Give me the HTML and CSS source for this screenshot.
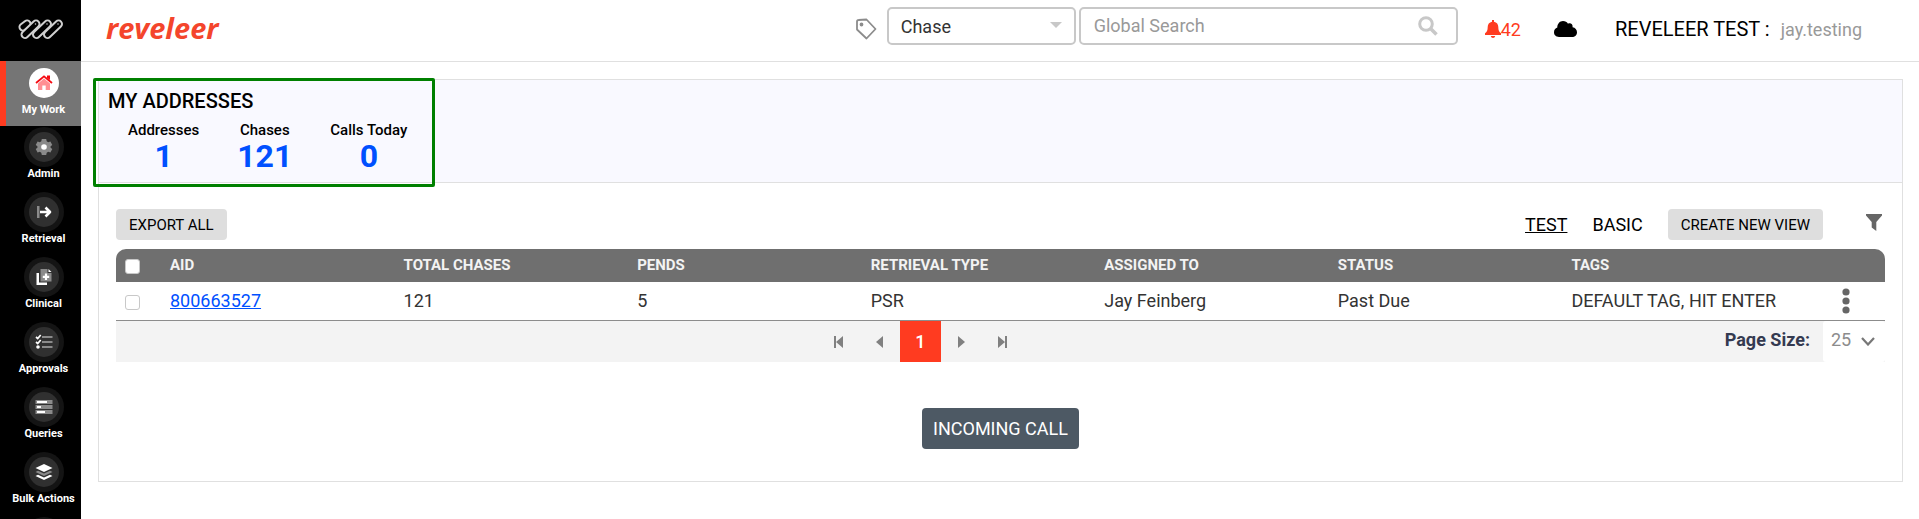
FILE: index.html
```html
<!DOCTYPE html>
<html lang="en">
<head>
    <meta charset="UTF-8">
    <meta name="viewport" content="width=device-width, initial-scale=1.0">
    <title>Reveleer - My Work</title>
    <link rel="stylesheet" href="styles.css">
</head>
<body>
    <!-- Left navigation -->
    <nav class="sidebar">
        <a class="sidebar-logo" href="#" aria-label="Home">
            <svg width="46" height="21" viewBox="0 0 46 21" fill="none" stroke-linecap="round">
                <path d="M9 5 L5 8" stroke="#d0d0d0" stroke-width="9"/>
                <path d="M9 5 L5 8" stroke="#000" stroke-width="5"/>
                <path d="M18 5 L7 15.500" stroke="#d0d0d0" stroke-width="9"/>
                <path d="M18 5 L7 15.500" stroke="#000" stroke-width="5"/>
                <path d="M29.500 5 L18.500 15.500" stroke="#d0d0d0" stroke-width="9"/>
                <path d="M29.500 5 L18.500 15.500" stroke="#000" stroke-width="5"/>
                <path d="M40.500 5 L29.500 15.500" stroke="#d0d0d0" stroke-width="9"/>
                <path d="M40.500 5 L29.500 15.500" stroke="#000" stroke-width="5"/>
                <path d="M17.500 5 V5.100 M29 5 V5.100 M40 5 V5.100" stroke="#d0d0d0" stroke-width="1.500"/>
            </svg>
        </a>
        <a class="nav-item active" href="#">
            <span class="nav-icon">
                <svg width="18" height="16" viewBox="0 0 18 16">
                    <path d="M3 8.500 L9 3.500 L15 8.500 V15 H10.700 V10.500 H7.300 V15 H3 Z" fill="#ff8f93"/>
                    <path d="M1 8 L9 1.300 L17 8" fill="none" stroke="#f50b12" stroke-width="1.800"/>
                    <path d="M12 0.500 H15 V5 L12 3 Z" fill="#f50b12"/>
                </svg>
            </span>
            My Work
        </a>
        <a class="nav-item" href="#">
            <span class="nav-icon">
                <svg width="18" height="18" viewBox="0 0 18 18">
                    <path d="M6.800 1 H11.200 L11.700 3.300 L13.200 4.200 L15.400 3.500 L17.300 7 L15.600 8.300 V9.700 L17.300 11 L15.400 14.500 L13.200 13.800 L11.700 14.700 L11.200 17 H6.800 L6.300 14.700 L4.800 13.800 L2.600 14.500 L0.700 11 L2.400 9.700 V8.300 L0.700 7 L2.600 3.500 L4.800 4.200 L6.300 3.300 Z" fill="#8a8a8a"/>
                    <circle cx="9" cy="9" r="2.800" fill="#fff"/>
                </svg>
            </span>
            Admin
        </a>
        <a class="nav-item" href="#">
            <span class="nav-icon">
                <svg width="16" height="14" viewBox="0 0 16 14">
                    <rect x="1" y="1" width="2.500" height="12" fill="#8a8a8a"/>
                    <path d="M4 7 H14 M9.500 2.500 L14 7 L9.500 11.500" fill="none" stroke="#fff" stroke-width="2.600" stroke-linejoin="round"/>
                </svg>
            </span>
            Retrieval
        </a>
        <a class="nav-item" href="#">
            <span class="nav-icon">
                <svg width="18" height="18" viewBox="0 0 18 18">
                    <path d="M1.500 5 H4 V14.500 H12 V17 H1.500 Z" fill="#fff"/>
                    <path d="M5.500 1 H12.500 V5 H16.500 V13.500 H5.500 Z" fill="#8a8a8a"/>
                    <path d="M13.500 1 L16.500 4 H13.500 Z" fill="#fff"/>
                    <path d="M11 5.500 V12 M7.800 8.800 H14.200" stroke="#fff" stroke-width="2.200"/>
                </svg>
            </span>
            Clinical
        </a>
        <a class="nav-item" href="#">
            <span class="nav-icon">
                <svg width="18" height="16" viewBox="0 0 18 16" fill="none">
                    <path d="M7 3 H17.500 M7 8 H17.500 M7 13 H17.500" stroke="#8a8a8a" stroke-width="2"/>
                    <path d="M1 3 L2.700 4.500 L5.700 1 M1 8 L2.700 9.500 L5.700 6" stroke="#fff" stroke-width="1.700"/>
                    <circle cx="3" cy="13" r="1.800" fill="#fff"/>
                </svg>
            </span>
            Approvals
        </a>
        <a class="nav-item" href="#">
            <span class="nav-icon">
                <svg width="18" height="16" viewBox="0 0 18 16">
                    <path d="M0.500 1 H17.500 V5 H0.500 Z M0.500 6 H17.500 V10 H0.500 Z M0.500 11 H17.500 V15 H0.500 Z" fill="#8a8a8a"/>
                    <path d="M2 2 H12 V4 H2 Z M2 7 H6 V9 H2 Z M2 12 H10 V14 H2 Z" fill="#fff"/>
                </svg>
            </span>
            Queries
        </a>
        <a class="nav-item" href="#">
            <span class="nav-icon">
                <svg width="18" height="18" viewBox="0 0 18 18">
                    <path d="M9 1 L17.500 5 L9 9 L0.500 5 Z" fill="#fff"/>
                    <path d="M0.500 9 L3 7.800 L9 10.500 L15 7.800 L17.500 9 L9 13 Z" fill="#8a8a8a"/>
                    <path d="M0.500 13 L3 11.800 L9 14.500 L15 11.800 L17.500 13 L9 17 Z" fill="#fff"/>
                </svg>
            </span>
            Bulk Actions
        </a>
        <a class="nav-item" href="#" aria-label="More">
            <span class="nav-icon"></span>
        </a>
    </nav>

    <div class="page">
        <header class="topbar">
            <a class="brand" href="#">reveleer</a>
            <div class="search">
                <svg class="tag-icon" width="22" height="22" viewBox="0 0 22 22" fill="none" stroke="#8c8c8c" stroke-width="1.800" stroke-linejoin="round">
                    <path d="M2 3.500 Q2 2 3.500 2 L11.500 1.500 L20.500 11 L11.500 20.500 L2 11.500 Z"/>
                    <circle cx="6.500" cy="6.500" r="1" fill="#8c8c8c"/>
                </svg>
                <div class="select-wrap">
                    <select class="search-type" aria-label="Search type">
                        <option>Chase</option>
                    </select>
                    <svg class="select-arrow" width="12" height="6" viewBox="0 0 12 6"><path d="M0 0 H12 L6 6 Z" fill="#c8c8c8"/></svg>
                </div>
                <div class="search-box">
                    <input type="text" placeholder="Global Search" aria-label="Global Search">
                    <button class="icon-button" aria-label="Search">
                        <svg width="20" height="20" viewBox="0 0 20 20" fill="none" stroke="#c8c8c8">
                            <circle cx="8" cy="8" r="6.300" stroke-width="3"/>
                            <path d="M12.500 12.500 L18.500 18.500" stroke-width="3.500"/>
                        </svg>
                    </button>
                </div>
            </div>
            <a class="alerts" href="#">
                <svg width="16" height="18" viewBox="0 0 16 18" fill="#ff3b20">
                    <path d="M7 0 H9 V1.700 C11.800 2.300 13.300 4.300 13.300 7 C13.300 10.500 14.200 12 16 13.300 V15 H0 V13.300 C1.800 12 2.700 10.500 2.700 7 C2.700 4.300 4.200 2.300 7 1.700 Z"/>
                    <path d="M5.800 16 H10.200 C10 17.300 9.100 18 8 18 C6.900 18 6 17.300 5.800 16 Z"/>
                </svg>
                42
            </a>
            <svg class="cloud-icon" width="23" height="16" viewBox="0 0 23 16">
                <path d="M5 16 C2 16 0 14 0 11.300 C0 9 1.300 7.300 3.300 6.600 C3.200 2.900 5.700 0 9 0 C11.200 0 13 1.100 14 2.700 C16.500 1.600 19 3.200 18.600 6.200 C21.200 6.600 23 8.600 23 11.200 C23 14 21 16 18 16 Z"/>
            </svg>
            <div class="user">
                <span>REVELEER TEST :</span>
                <a href="#">jay.testing</a>
            </div>
        </header>

        <main class="panel">
            <section class="summary">
                <div class="summary-box">
                    <h1>MY ADDRESSES</h1>
                    <div class="stats">
                        <div class="stat"><span>Addresses</span><strong>1</strong></div>
                        <div class="stat"><span>Chases</span><strong>121</strong></div>
                        <div class="stat"><span>Calls Today</span><strong>0</strong></div>
                    </div>
                </div>
            </section>

            <section class="grid">
                <div class="toolbar">
                    <button class="gray-button">EXPORT ALL</button>
                    <div class="views">
                        <a class="selected" href="#">TEST</a>
                        <a href="#">BASIC</a>
                        <button class="gray-button">CREATE NEW VIEW</button>
                        <button class="icon-button filter" aria-label="Filter">
                            <svg width="16" height="17" viewBox="0 0 16 17"><path d="M0 0 H16 V1.500 L10.300 8 V17 L5.700 13.500 V8 L0 1.500 Z" fill="#666"/></svg>
                        </button>
                    </div>
                </div>

                <table>
                    <thead>
                        <tr>
                            <th class="check-col"><input type="checkbox" aria-label="Select all"></th>
                            <th>AID</th>
                            <th>TOTAL CHASES</th>
                            <th>PENDS</th>
                            <th>RETRIEVAL TYPE</th>
                            <th>ASSIGNED TO</th>
                            <th>STATUS</th>
                            <th>TAGS</th>
                            <th class="menu-col"></th>
                        </tr>
                    </thead>
                    <tbody>
                        <tr>
                            <td class="check-col"><input type="checkbox" aria-label="Select 800663527"></td>
                            <td><a href="#">800663527</a></td>
                            <td>121</td>
                            <td>5</td>
                            <td>PSR</td>
                            <td>Jay Feinberg</td>
                            <td>Past Due</td>
                            <td>DEFAULT TAG, HIT ENTER</td>
                            <td class="menu-col">
                                <button class="icon-button" aria-label="Row menu">
                                    <svg width="8" height="26" viewBox="0 0 8 26" fill="#666"><circle cx="4" cy="4" r="3.600"/><circle cx="4" cy="13" r="3.600"/><circle cx="4" cy="22" r="3.600"/></svg>
                                </button>
                            </td>
                        </tr>
                    </tbody>
                </table>

                <div class="pager">
                    <div class="pages">
                        <button aria-label="First page"><svg width="9" height="12" viewBox="0 0 9 12"><path d="M0 0 H2 V12 H0 Z M9 0 V12 L2 6 Z"/></svg></button>
                        <button aria-label="Previous page"><svg width="7" height="12" viewBox="0 0 7 12"><path d="M7 0 V12 L0 6 Z"/></svg></button>
                        <button class="current">1</button>
                        <button aria-label="Next page"><svg width="7" height="12" viewBox="0 0 7 12"><path d="M0 0 V12 L7 6 Z"/></svg></button>
                        <button aria-label="Last page"><svg width="9" height="12" viewBox="0 0 9 12"><path d="M9 0 H7 V12 H9 Z M0 0 V12 L7 6 Z"/></svg></button>
                    </div>
                    <label for="pageSize">Page Size:</label>
                    <div class="select-wrap">
                        <select id="pageSize">
                            <option>25</option>
                        </select>
                        <svg class="select-arrow" width="14" height="9" viewBox="0 0 14 9" fill="none" stroke="#777" stroke-width="2.200"><path d="M1 1 L7 7.500 L13 1"/></svg>
                    </div>
                </div>

                <button class="call-button">INCOMING CALL</button>
            </section>
        </main>
    </div>
</body>
</html>
```
FILE: styles.css
```css
* {
    box-sizing: border-box;
}
body {
    margin: 0;
    display: flex;
    height: 100vh;
    overflow: hidden;
    font-family: Roboto, "Liberation Sans", sans-serif;
    font-size: 18px;
    color: #333;
    background: #fff;
}
a {
    color: inherit;
    text-decoration: none;
}
button, input, select {
    font: inherit;
    color: inherit;
}
button {
    border: none;
    cursor: pointer;
}
svg {
    display: block;
}

/* Sidebar */
.sidebar {
    flex: none;
    width: 81px;
    background: #000;
    overflow: hidden;
}
.sidebar-logo {
    display: flex;
    align-items: center;
    justify-content: center;
    height: 61px;
    padding-bottom: 3px;
}
.nav-item {
    display: flex;
    flex-direction: column;
    align-items: center;
    gap: 5px;
    height: 65px;
    padding: 6px 0 0 6px;
    color: #fff;
    font-size: 11px;
    font-weight: 700;
    line-height: 14px;
}
.nav-item.active {
    background: #757575;
    border-left: 6px solid #ff3b20;
    padding: 7px 0 0;
}
.nav-icon {
    display: flex;
    align-items: center;
    justify-content: center;
    width: 30px;
    height: 30px;
    border-radius: 50%;
    background: #303030;
    box-shadow: 0 0 0 5px #141414;
}
.active .nav-icon {
    background: #fff;
    box-shadow: none;
}

/* Top bar */
.page {
    flex: 1;
    min-width: 0;
}
.topbar {
    display: flex;
    align-items: center;
    height: 62px;
    padding: 0 57px 3px 25px;
    border-bottom: 1px solid #e0e0e0;
}
.brand {
    margin-right: auto;
    padding-bottom: 2px;
    color: #f4452c;
    font-family: "Open Sans", sans-serif;
    font-size: 29px;
    font-style: italic;
    font-weight: 700;
    line-height: 36px;
}
.search {
    display: flex;
    align-items: center;
    gap: 3px;
    margin-bottom: 6px;
}
.tag-icon {
    margin: 5px 7px 0 0;
}
.select-wrap {
    position: relative;
}
.select-wrap select {
    appearance: none;
    display: block;
    outline: none;
    background: #fff;
}
.select-arrow {
    position: absolute;
    pointer-events: none;
}
.search-type {
    width: 189px;
    height: 38px;
    padding: 0 12px;
    border: 2px solid #c8c8c8;
    border-radius: 5px;
}
.search-type + .select-arrow {
    right: 14px;
    top: 15px;
}
.search-box {
    display: flex;
    align-items: center;
    width: 379px;
    height: 38px;
    padding: 0 18px 0 13px;
    border: 2px solid #c8c8c8;
    border-radius: 5px;
}
.search-box input {
    flex: 1;
    min-width: 0;
    padding: 0 0 2px;
    border: none;
    outline: none;
    background: none;
}
.search-box input::placeholder {
    color: #999;
    opacity: 1;
}
.icon-button {
    padding: 0;
    background: none;
}
.alerts {
    display: flex;
    align-items: center;
    margin: 0 33px 0 27px;
    color: #ff3b20;
}
.user {
    display: flex;
    align-items: baseline;
    gap: 11px;
    margin-left: 38px;
    color: #000;
    font-size: 20px;
}
.user a {
    color: #999;
    font-size: 18px;
}

/* Panel */
.panel {
    margin: 17px 16px 0 17px;
    border: 1px solid #e0e0e0;
}
.summary {
    position: relative;
    height: 103px;
    background: #f9f9ff;
    border-bottom: 1px solid #e0e0e0;
}
.summary-box {
    position: absolute;
    left: -6px;
    top: -2px;
    height: 109px;
    padding: 7px 12px;
    border: 3px solid #008000;
    border-radius: 2px;
    color: #000;
}
.summary h1 {
    margin: 0;
    font-size: 20px;
    font-weight: 500;
    line-height: 26px;
}
.stats {
    display: flex;
    gap: 38px;
    padding: 7px 13px 6px 20px;
}
.stat {
    display: flex;
    flex-direction: column;
    align-items: center;
    font-size: 15px;
    font-weight: 500;
    line-height: 18px;
    white-space: nowrap;
}
.stat strong {
    color: #0050ff;
    font-size: 32px;
    line-height: 35px;
}

/* Grid */
.grid {
    padding: 26px 17px 32px;
}
.toolbar, .views {
    display: flex;
    align-items: center;
    color: #000;
}
.toolbar {
    justify-content: space-between;
    margin-bottom: 9px;
}
.views {
    gap: 25px;
    padding-right: 3px;
}
.views .selected {
    text-decoration: underline;
}
.gray-button {
    height: 31px;
    padding: 0 13px;
    border-radius: 4px;
    background: #dedede;
    font-size: 15px;
}
.views .filter {
    margin: 0 0 5px 18px;
}
table {
    width: 100%;
    table-layout: fixed;
    border-spacing: 0;
    border-bottom: 1px solid #8c8c8c;
}
th, td {
    padding: 0 0 2px;
    text-align: left;
    white-space: nowrap;
}
th {
    height: 33px;
    background: #6f6f6f;
    color: #f3f3f3;
    font-size: 15px;
    font-weight: 700;
}
th:first-child {
    border-top-left-radius: 10px;
}
th:last-child {
    border-top-right-radius: 10px;
}
td {
    height: 38px;
}
td a {
    color: #0050ff;
    text-decoration: underline;
}
.check-col {
    width: 54px;
    padding: 2px 0 0 9px;
}
.menu-col {
    width: 80px;
    padding: 0 0 0 37px;
}
.menu-col .icon-button {
    display: block;
}
input[type="checkbox"] {
    appearance: none;
    display: block;
    width: 15px;
    height: 15px;
    margin: 0;
    border: 1px solid #c8c8c8;
    border-radius: 3px;
    background: #fff;
}

/* Pager */
.pager {
    display: flex;
    align-items: center;
    height: 41px;
    background: #f3f3f3;
}
.pages {
    flex: 1;
    display: flex;
    justify-content: center;
}
.pages button {
    display: flex;
    align-items: center;
    justify-content: center;
    width: 41px;
    height: 41px;
    padding: 0;
    background: none;
    fill: #808080;
}
.pages .current {
    background: #ff3b20;
    color: #fff;
    font-weight: 500;
}
.pager label {
    margin-right: 13px;
    padding-bottom: 4px;
    color: #343a50;
    font-weight: 700;
}
.pager select {
    width: 62px;
    height: 41px;
    padding: 0 8px 4px;
    border: none;
    border-radius: 3px;
    color: #8c8c8c;
}
.pager .select-arrow {
    right: 10px;
    top: 16px;
}
.call-button {
    display: block;
    height: 41px;
    margin: 46px auto 0;
    padding: 0 11px;
    border-radius: 4px;
    background: #4d5964;
    color: #fff;
}
```
